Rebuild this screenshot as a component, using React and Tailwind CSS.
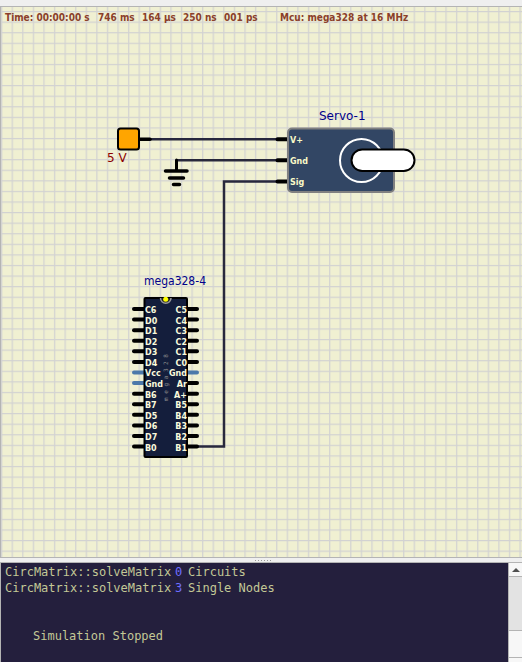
const LEFT_PINS = ['C6', 'D0', 'D1', 'D2', 'D3', 'D4', 'Vcc', 'Gnd', 'B6', 'B7', 'D5', 'D6', 'D7', 'B0'];
const RIGHT_PINS = ['C5', 'C4', 'C3', 'C2', 'C1', 'C0', 'Gnd', 'Ar', 'A+', 'B5', 'B4', 'B3', 'B2', 'B1'];
const PITCH = 10.58;

function StatusLine() {
  return (
    <header className="absolute left-[5px] top-[2px] flex whitespace-pre font-['DejaVu_Sans_Condensed','Noto_Sans',sans-serif] text-[10px] font-bold leading-[18px] text-[#8b3f2b]">
      <span className="w-[93px]">Time: 00:00:00 s</span>
      <span className="w-[44px]">746 ms</span>
      <span className="w-[41px]">164 µs</span>
      <span className="w-[41px]">250 ns</span>
      <span className="w-[56px]">001 ps</span>
      <span>Mcu: mega328 at 16 MHz</span>
    </header>
  );
}

function Voltage() {
  return (
    <g>
      <path d="M139 132.300H150" stroke="#000" strokeWidth="3.500" strokeLinecap="round" />
      <rect x="118" y="121.500" width="21" height="21" rx="2.500" fill="#ffa500" stroke="#000" strokeWidth="2" />
      <text x="107" y="155" fontSize="12" fill="#8b0000">5 V</text>
    </g>
  );
}

function Ground() {
  return (
    <g stroke="#000" strokeLinecap="round">
      <path d="M176.500 153V163" strokeWidth="3" />
      <path d="M165.500 164H187M169.500 171H183.500M173.500 177.500H179.500" strokeWidth="3.500" />
    </g>
  );
}

function Servo() {
  return (
    <g>
      <path d="M277.500 132.300H287M277.500 153.300H287M277.500 174.500H287" stroke="#000" strokeWidth="4" strokeLinecap="round" />
      <rect x="288" y="121.500" width="106" height="63.500" rx="4" fill="#324664" stroke="#808080" strokeWidth="2" />
      <circle cx="361.500" cy="153.500" r="21.500" fill="none" stroke="#fff" strokeWidth="2" />
      <rect x="351.500" y="142.500" width="63" height="21.500" rx="10.750" fill="#fff" stroke="#000" strokeWidth="2" />
      <g fontSize="8" fontWeight="bold" fill="#fafac8">
        <text x="290" y="136">V+</text>
        <text x="290" y="157">Gnd</text>
        <text x="290" y="178">Sig</text>
      </g>
      <text x="319" y="113" fontSize="12" fill="#00008b">Servo-1</text>
    </g>
  );
}

function Mega328() {
  return (
    <g>
      {LEFT_PINS.map((name, i) => (
        <path key={name} d={`M134 ${302 + i * PITCH}H144`} stroke={i === 6 || i === 7 ? '#4b78aa' : '#000'} strokeWidth="4" strokeLinecap="round" />
      ))}
      {RIGHT_PINS.map((name, i) => (
        <path key={name} d={`M188 ${302 + i * PITCH}H197`} stroke={i === 6 ? '#4b78aa' : '#000'} strokeWidth="4" strokeLinecap="round" />
      ))}
      <rect x="144.500" y="291" width="42.500" height="159" rx="1" fill="#141e3c" stroke="#000" strokeWidth="2" />
      <path d="M160.500 291A5 5 0 0 0 171 291" fill="#222" stroke="#999" strokeWidth="1.500" />
      <circle cx="165.700" cy="292.300" r="2.500" fill="#ff0" />
      <text transform="translate(168 394) rotate(-90)" fontSize="6" fill="#8c8c8c" className="font-['DejaVu_Sans_Mono',monospace]">m e g a 3 2 8</text>
      <g fontSize="8" fontWeight="bold" fill="#fafadc">
        {LEFT_PINS.map((name, i) => <text key={name} x="145" y={306 + i * PITCH}>{name}</text>)}
        {RIGHT_PINS.map((name, i) => <text key={name} x="187" textAnchor="end" y={306 + i * PITCH}>{name}</text>)}
      </g>
      <text x="144" y="278" fontSize="12" fill="#00008b" className="font-['DejaVu_Sans_Condensed','Noto_Sans',sans-serif]">mega328-4</text>
    </g>
  );
}

function Circuit() {
  return (
    <svg className="block h-full w-full font-['DejaVu_Sans',sans-serif]" role="img" aria-label="Circuit">
      <defs>
        <pattern id="grid" x="1" y="4" width={PITCH} height={PITCH} patternUnits="userSpaceOnUse">
          <path d="M0.700 0V10.580M0 0.700H10.580" stroke="#d2d2d2" strokeWidth="1.200" />
        </pattern>
      </defs>
      <rect width="100%" height="100%" fill="#f0f0d2" />
      <rect width="100%" height="100%" fill="url(#grid)" />
      <rect width="1" height="100%" fill="#b4b4b4" />
      <path d="M150 132.300H278M176 153.300H278M278 174.500H224V439.500H197" fill="none" stroke="#28283c" strokeWidth="2.500" />
      <Voltage />
      <Ground />
      <Servo />
      <Mega328 />
    </svg>
  );
}

function MatrixLine({ count, label }) {
  return (
    <p className="flex">
      <span className="w-[170px]">CircMatrix::solveMatrix</span>
      <span className="w-[13px] text-[#6e6eff]">{count}</span>
      <span>{label}</span>
    </p>
  );
}

function Console() {
  return (
    <section className="flex h-[100px] shrink-0 border-l border-t border-[#b4b4b4]">
      <output className="min-w-0 flex-1 overflow-hidden whitespace-pre bg-[#241f3d] pl-1 pt-px font-['DejaVu_Sans_Mono',monospace] text-[12px] leading-4 text-[#c3c896]">
        <MatrixLine count="0" label="Circuits" />
        <MatrixLine count="3" label="Single Nodes" />
        <p className="pl-7 pt-8">Simulation Stopped</p>
      </output>
      <div className="flex w-[14px] flex-col border-l border-[#b4b4b4] bg-[#e3e3e3]">
        <button aria-label="Scroll up" className="flex h-[14px] items-center justify-center border-b border-[#b4b4b4] bg-[#f7f7f7]">
          <svg width="8" height="4" className="block"><path d="M0 4L4 0L8 4Z" fill="#505050" /></svg>
        </button>
        <div className="mt-[53px] h-[28px] border-y border-[#b4b4b4] bg-[#f7f7f7]" />
        <div className="flex-1 bg-[#f7f7f7]" />
      </div>
    </section>
  );
}

export default function App() {
  return (
    <div className="flex h-screen flex-col overflow-hidden bg-[#efefef] pt-[6px]">
      <main className="relative min-h-0 flex-1 overflow-hidden border-y border-[#b4b4b4]">
        <Circuit />
        <StatusLine />
      </main>
      <div className="flex h-1 shrink-0 items-center justify-center gap-[2px] pl-1">
        {[0, 1, 2, 3, 4, 5].map((i) => <i key={i} className="h-px w-px bg-[#999]" />)}
      </div>
      <Console />
    </div>
  );
}
